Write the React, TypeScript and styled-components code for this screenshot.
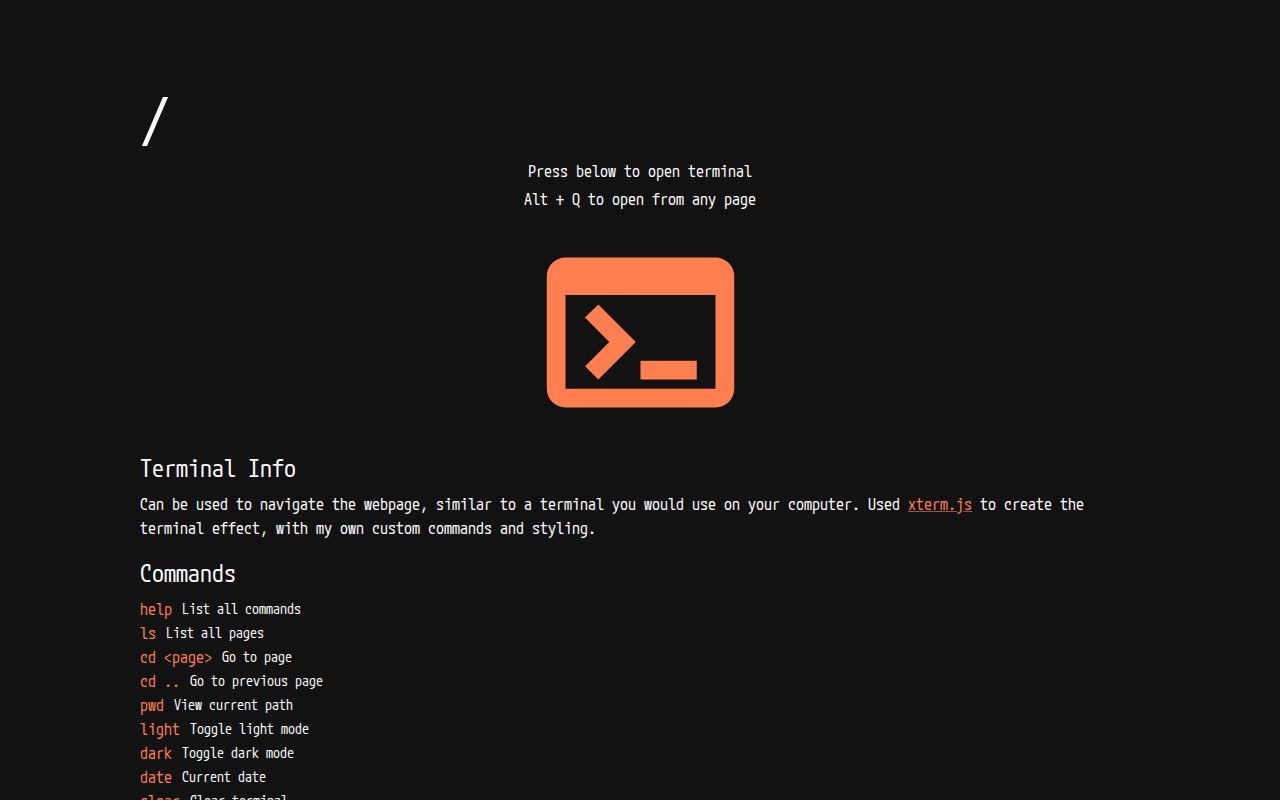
import React from "react";
import styled, { createGlobalStyle } from "styled-components";
import { MdTerminal } from "react-icons/md";

const GlobalStyle = createGlobalStyle`
  *, *::before, *::after {
    box-sizing: border-box;
  }
  body {
    margin: 0;
    background: #121212;
    color: #fff;
    font-family: "M PLUS 1 Code", "Noto Sans Mono CJK JP", "Liberation Mono", "Noto Sans CJK JP", monospace;
    font-size: 16px;
    line-height: 24px;
  }
`;

const Page = styled.main`
  max-width: 1000px;
  margin: 0 auto;
  padding: 85px 0 24px;
`;

const PathTitle = styled.h1`
  margin: 0 0 2px;
  font-size: 60px;
  font-weight: 400;
  line-height: 72px;
`;

const Launcher = styled.section`
  display: flex;
  flex-direction: column;
  align-items: center;
`;

const Hint = styled.p`
  margin: 0 0 4px;
`;

const LaunchButton = styled.button`
  display: flex;
  padding: 5px 8px 7px;
  border: 0;
  background: transparent;
  color: #ff7f50;
  cursor: pointer;
`;

const SectionTitle = styled.h2`
  margin: 0 0 8px;
  font-size: 24px;
  font-weight: 400;
  line-height: 32px;
`;

const Paragraph = styled.p`
  margin: 0 0 17px;
`;

const Link = styled.a`
  color: #ff7f50;
  text-decoration: underline;
  text-decoration-color: rgba(255, 127, 80, 0.6);

  &:hover {
    text-decoration-color: currentColor;
  }
`;

const CommandList = styled.dl`
  margin: 0;
`;

const CommandRow = styled.div`
  display: flex;
  align-items: center;
  gap: 10px;
`;

const CommandName = styled.dt`
  color: #ff7f50;
`;

const CommandText = styled.dd`
  margin: 0;
  font-size: 14px;
  line-height: 20px;
`;

const commands = [
  { name: "help", text: "List all commands" },
  { name: "ls", text: "List all pages" },
  { name: "cd <page>", text: "Go to page" },
  { name: "cd ..", text: "Go to previous page" },
  { name: "pwd", text: "View current path" },
  { name: "light", text: "Toggle light mode" },
  { name: "dark", text: "Toggle dark mode" },
  { name: "date", text: "Current date" },
  { name: "clear", text: "Clear terminal" },
];

export default function App() {
  return (
    <>
      <GlobalStyle />
      <Page>
        <PathTitle>/</PathTitle>
        <Launcher>
          <Hint>Press below to open terminal</Hint>
          <Hint>Alt + Q to open from any page</Hint>
          <LaunchButton type="button" aria-label="Open terminal">
            <MdTerminal size={225} aria-hidden="true" />
          </LaunchButton>
        </Launcher>
        <section>
          <SectionTitle>Terminal Info</SectionTitle>
          <Paragraph>
            Can be used to navigate the webpage, similar to a terminal you would use on your
            computer. Used <Link href="https://xtermjs.org/">xterm.js</Link> to create the
            terminal effect, with my own custom commands and styling.
          </Paragraph>
        </section>
        <section>
          <SectionTitle>Commands</SectionTitle>
          <CommandList>
            {commands.map((command) => (
              <CommandRow key={command.name}>
                <CommandName>{command.name}</CommandName>
                <CommandText>{command.text}</CommandText>
              </CommandRow>
            ))}
          </CommandList>
        </section>
      </Page>
    </>
  );
}
